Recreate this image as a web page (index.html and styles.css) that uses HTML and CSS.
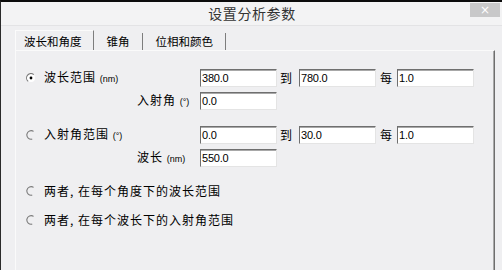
FILE: index.html
```html
<!DOCTYPE html>
<html>
<head>
<meta charset="utf-8">
<link rel="stylesheet" href="styles.css">
</head>
<body>
<div class="window">
  <div class="titlebar">
    <span class="title">设置分析参数</span>
    <span class="close">×</span>
  </div>
  <div class="tabs">
    <div class="tab active">波长和角度</div>
    <div class="tab">锥角</div>
    <div class="tab">位相和颜色</div>
  </div>
  <div class="panel">
    <div class="row">
      <span class="radio"><svg width="10" height="10" viewBox="0 0 10 10"><circle cx="5" cy="5" r="4" fill="#fff"/><path d="M7.8 1.6 A4.3 4.3 0 0 0 2.2 8.4" stroke="#7a7a7a" stroke-width="1.1" fill="none"/><circle cx="5" cy="5" r="1.4" fill="#000"/></svg></span>
      <span class="label">波长范围 <small>(nm)</small></span>
      <span class="field">380.0</span>
      <span class="conj">到</span>
      <span class="field">780.0</span>
      <span class="conj each">每</span>
      <span class="field">1.0</span>
    </div>
    <div class="row sub">
      <span class="radio"></span>
      <span class="label">入射角 <small>(°)</small></span>
      <span class="field">0.0</span>
    </div>
    <div class="row group">
      <span class="radio"><svg width="10" height="10" viewBox="0 0 10 10"><path d="M7.6 1.4 A4.3 4.3 0 1 0 6.2 9.1" stroke="#7a7a7a" stroke-width="1.1" fill="none"/></svg></span>
      <span class="label">入射角范围 <small>(°)</small></span>
      <span class="field">0.0</span>
      <span class="conj">到</span>
      <span class="field">30.0</span>
      <span class="conj each">每</span>
      <span class="field">1.0</span>
    </div>
    <div class="row sub">
      <span class="radio"></span>
      <span class="label">波长 <small>(nm)</small></span>
      <span class="field">550.0</span>
    </div>
    <div class="row opt first-opt">
      <span class="radio"><svg width="10" height="10" viewBox="0 0 10 10"><path d="M7.6 1.4 A4.3 4.3 0 1 0 6.2 9.1" stroke="#7a7a7a" stroke-width="1.1" fill="none"/></svg></span>
      <span class="label free">两者, 在每个角度下的波长范围</span>
    </div>
    <div class="row opt second-opt">
      <span class="radio"><svg width="10" height="10" viewBox="0 0 10 10"><path d="M7.6 1.4 A4.3 4.3 0 1 0 6.2 9.1" stroke="#7a7a7a" stroke-width="1.1" fill="none"/></svg></span>
      <span class="label free">两者, 在每个波长下的入射角范围</span>
    </div>
  </div>
</div>
</body>
</html>
```
FILE: styles.css
```css
html, body {
  margin: 0;
  padding: 0;
}
body {
  font-family: "Noto Sans CJK SC", "Liberation Sans", sans-serif;
  color: #000;
}
.window {
  width: 502px;
  height: 270px;
  box-sizing: border-box;
  border-top: 2px solid #0c0c0c;
  border-left: 1px solid #2a2a2a;
  background: #efeff1;
  overflow: hidden;
  display: flex;
  flex-direction: column;
}
.titlebar {
  height: 23px;
  flex: none;
  display: grid;
  grid-template-columns: 1fr auto 1fr;
  align-items: center;
  background: #f3f3f4;
  border-bottom: 1px solid #e3e3e5;
}
.title {
  grid-column: 2;
  font-size: 14px;
  letter-spacing: 0.6px;
  color: #333;
  line-height: 23px;
  padding-left: 1px;
}
.close {
  grid-column: 3;
  justify-self: end;
  align-self: start;
  margin-top: 1px;
  margin-right: 2px;
  width: 30px;
  height: 14px;
  background: #c8c8c9;
  color: #fff;
  font-family: "DejaVu Sans", sans-serif;
  font-size: 12px;
  line-height: 14px;
  text-align: center;
}
.tabs {
  flex: none;
  display: flex;
  height: 20px;
  margin-top: 4px;
  padding-left: 14px;
}
.tab {
  height: 17px;
  margin-top: 3px;
  line-height: 17px;
  font-size: 11.5px;
  padding: 0 12px 0 13px;
  border-right: 1px solid #7d7d7d;
  white-space: nowrap;
}
.tab.active {
  margin-top: 0;
  height: 20px;
  box-sizing: border-box;
  padding: 2px 11px 0 8px;
  border-top: 1px solid #fbfbfb;
  border-left: 1px solid #fbfbfb;
  line-height: 17px;
}
.panel {
  flex: 1;
  margin-left: 14px;
  margin-right: 7px;
  border-top: 1px solid #fafafa;
  border-left: 1px solid #fafafa;
  border-right: 1px solid #6e6e6e;
  box-shadow: inset -1px 0 0 #a9a9a9;
  padding: 18px 0 0 10px;
}
.row {
  display: flex;
  align-items: center;
  height: 18px;
}
.row.sub {
  margin-top: 5px;
}
.row.group {
  margin-top: 16px;
}
.row.first-opt {
  margin-top: 15px;
}
.row.second-opt {
  margin-top: 11px;
}
.radio {
  width: 18px;
  height: 10px;
  flex: none;
  display: flex;
}
.label {
  width: 156px;
  box-sizing: border-box;
  flex: none;
  font-size: 12px;
  letter-spacing: 1px;
  white-space: nowrap;
  line-height: 18px;
}
.sub .label {
  padding-left: 93px;
}
.label.free {
  width: auto;
}
.label small {
  font-family: "Liberation Sans", sans-serif;
  font-size: 9px;
  letter-spacing: 0;
}
.field {
  width: 77px;
  height: 18px;
  box-sizing: border-box;
  flex: none;
  background: #fff;
  border: 1px solid;
  border-color: #6f6f6f #e4e4e4 #e4e4e4 #6f6f6f;
  box-shadow: inset 0 1px 0 #a8a8a8;
  font-family: "Liberation Sans", sans-serif;
  font-size: 11px;
  line-height: 16px;
  padding-left: 1px;
  letter-spacing: -0.2px;
}
.conj {
  width: 22px;
  box-sizing: border-box;
  flex: none;
  padding-left: 3px;
  font-size: 12px;
  line-height: 18px;
}
.conj.each {
  width: 21px;
  padding-left: 4px;
}
```
